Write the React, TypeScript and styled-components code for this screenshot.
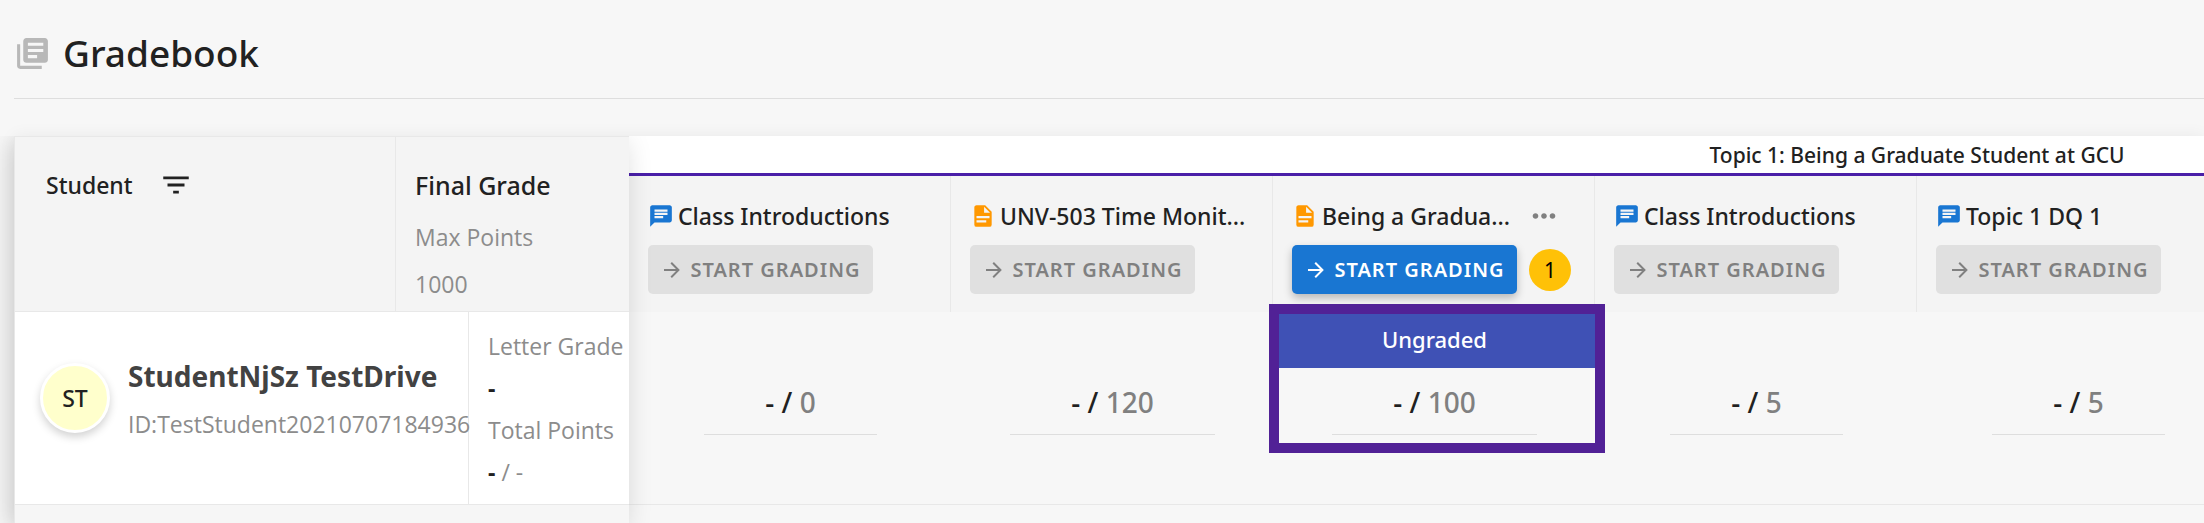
import React from "react";
import styled, { createGlobalStyle } from "styled-components";
import { MdChat, MdFilterList, MdLibraryBooks, MdMoreHoriz } from "react-icons/md";

const GlobalStyle = createGlobalStyle`
  * { box-sizing: border-box; }
  body {
    margin: 0;
    background: #f7f7f7;
    color: #212121;
    font-family: "Noto Sans", "Open Sans", sans-serif;
    font-size: 23px;
    font-weight: 500;
    line-height: 32px;
  }
`;

const Page = styled.div`
  display: flex;
  flex-direction: column;
  height: 100vh;
  min-height: 520px;
  padding-left: 14px;
  overflow: hidden;
`;

const PageHeader = styled.header`
  display: flex;
  align-items: center;
  gap: 12px;
  padding: 28px 0 20px;
  border-bottom: 1px solid #dedede;
  color: #b8b8b8;
`;

const PageTitle = styled.h1`
  margin: 0;
  color: #212121;
  font-size: 37px;
  font-weight: 500;
  line-height: 50px;
`;

const Gradebook = styled.main`
  display: flex;
  flex: 1;
  margin-top: 37px;
  box-shadow: 0 0 16px rgba(0, 0, 0, 0.06);
`;

const StudentPane = styled.section`
  flex: none;
  width: 615px;
  position: relative;
  z-index: 1;
  border-left: 1px solid #e8e8e8;
  background: #f6f6f6;
  box-shadow: -4px 6px 26px rgba(0, 0, 0, 0.16);
  clip-path: inset(0 -34px 0 -14px);
`;

const Table = styled.table`
  width: 100%;
  border-collapse: separate;
  border-spacing: 0;
  table-layout: fixed;
`;

const StudentHead = styled.th<{ $divided?: boolean }>`
  height: 176px;
  padding: ${(p) => (p.$divided ? "16px 18px 0 19px" : "16px 31px 0")};
  border-top: 1px solid #e8e8e8;
  border-bottom: 1px solid #e8e8e8;
  border-left: ${(p) => (p.$divided ? "1px solid #e8e8e8" : "0")};
  background: #f4f4f4;
  text-align: left;
  vertical-align: top;
  font-weight: 500;
`;

const HeadLine = styled.div`
  display: flex;
  align-items: center;
  gap: 26px;
  height: 64px;
`;

const IconButton = styled.button`
  display: flex;
  padding: 0;
  border: 0;
  background: none;
  color: inherit;
`;

const FinalTitle = styled.div`
  padding-top: 16px;
  font-size: 25px;
`;

const Muted = styled.div<{ $gap?: number }>`
  margin-top: ${(p) => p.$gap ?? 0}px;
  color: #8c8c8c;
  font-family: "Open Sans", "Noto Sans", sans-serif;
  font-weight: 400;
`;

const StudentCell = styled.td<{ $divided?: boolean }>`
  height: 193px;
  padding: ${(p) => (p.$divided ? "13px 0 0 19px" : "0 0 20px 25px")};
  border-bottom: 1px solid #e8e8e8;
  border-left: ${(p) => (p.$divided ? "1px solid #e8e8e8" : "0")};
  background: #fff;
  vertical-align: ${(p) => (p.$divided ? "top" : "middle")};
  white-space: nowrap;
`;

const Student = styled.div`
  display: flex;
  align-items: center;
  gap: 18px;
`;

const StudentText = styled.div`
  padding-top: 4px;
`;

const Avatar = styled.div`
  display: flex;
  flex: none;
  align-items: center;
  justify-content: center;
  width: 70px;
  height: 70px;
  border: 3px solid #fff;
  border-radius: 50%;
  background: #ffffcc;
  box-shadow: 0 4px 8px rgba(0, 0, 0, 0.18);
`;

const StudentName = styled.div`
  color: #424242;
  font-size: 28px;
  font-weight: 700;
`;

const Stat = styled.div<{ $strong?: boolean }>`
  height: 42px;
  line-height: 42px;
  color: ${(p) => (p.$strong ? "#212121" : "#8c8c8c")};
  font-family: "Open Sans", "Noto Sans", sans-serif;
  font-weight: ${(p) => (p.$strong ? 700 : 400)};
`;

const Light = styled.span`
  color: #8c8c8c;
  font-weight: 400;
`;

const AssignmentPane = styled.section`
  flex: 1;
  min-width: 0;
  overflow: hidden;
`;

const AssignmentTable = styled(Table)`
  width: 2576px;
`;

const TopicHead = styled.th`
  height: 40px;
  padding: 0;
  border-bottom: 3px solid #4a1fa8;
  background: #fff;
  font-size: 21px;
  font-weight: 500;
  line-height: 32px;
`;

const AssignmentHead = styled.th`
  height: 136px;
  padding: 23px 19px 0;
  border-right: 1px solid #e8e8e8;
  background: #f4f4f4;
  text-align: left;
  vertical-align: top;
  font-weight: 500;
`;

const AssignmentTitle = styled.div`
  display: flex;
  align-items: center;
  height: 34px;
`;

const TitleText = styled.span`
  flex: 1;
  min-width: 0;
  margin-left: 4px;
  white-space: nowrap;
`;

const MenuButton = styled(IconButton)`
  margin-right: 14px;
  color: #808080;
`;

const Actions = styled.div`
  display: flex;
  align-items: center;
  gap: 12px;
  margin-top: 12px;
`;

const StartButton = styled.button`
  display: flex;
  align-items: center;
  justify-content: center;
  gap: 6px;
  width: 225px;
  height: 49px;
  padding: 0;
  border: 0;
  border-radius: 5px;
  background: #1976d2;
  color: #fff;
  font: inherit;
  font-size: 20px;
  font-weight: 600;
  letter-spacing: 1px;
  white-space: nowrap;
  box-shadow: 0 4px 8px rgba(0, 0, 0, 0.25);

  &:disabled {
    background: #e0e0e0;
    color: #808080;
    box-shadow: none;
  }
`;

const CountBadge = styled.span`
  display: flex;
  align-items: center;
  justify-content: center;
  width: 42px;
  height: 42px;
  border-radius: 50%;
  background: #ffc107;
  color: #000;
  font-size: 21px;
  font-weight: 400;
`;

const ScoreCell = styled.td`
  position: relative;
  height: 193px;
  padding: 0 0 0 1px;
  border-bottom: 1px solid #e8e8e8;
  text-align: center;
  vertical-align: top;
`;

const StatusBand = styled.div<{ $filled: boolean }>`
  height: 56px;
  background: ${(p) => (p.$filled ? "#3f51b5" : "transparent")};
  color: #fff;
  font-size: 22px;
  line-height: 54px;
`;

const Score = styled.div`
  display: inline-block;
  height: 67px;
  padding: 0 61px;
  border-bottom: 1px solid #dedede;
  font-size: 28px;
  line-height: 68px;

  span { color: #808080; }
`;

const Highlight = styled.div`
  position: absolute;
  inset: -8px -10px 51px -4px;
  border: 10px solid #512196;
  z-index: 1;
`;

const FileIcon = () => (
  <svg width="26" height="26" viewBox="0 0 24 24" fill="#ff9800" aria-hidden="true">
    <path d="M13 9h5.500L13 3.500V9M6 2h8l6 6v12a2 2 0 0 1-2 2H6a2 2 0 0 1-2-2V4c0-1.110.890-2 2-2m9 16v-2H6v2h9m3-4v-2H6v2h12z" />
  </svg>
);

const ArrowIcon = () => (
  <svg width="24" height="24" viewBox="0 0 24 24" fill="currentColor" aria-hidden="true">
    <path d="M4 11v2h12l-5.500 5.500 1.420 1.420L19.840 12l-7.920-7.920L10.500 5.500 16 11H4z" />
  </svg>
);

type Assignment = {
  title: string;
  kind: "chat" | "file";
  points: number;
  pending?: number;
};

const assignments: Assignment[] = [
  { title: "Class Introductions", kind: "chat", points: 0 },
  { title: "UNV-503 Time Monit...", kind: "file", points: 120 },
  { title: "Being a Gradua...", kind: "file", points: 100, pending: 1 },
  { title: "Class Introductions", kind: "chat", points: 5 },
  { title: "Topic 1 DQ 1", kind: "chat", points: 5 },
];

const COLUMN_COUNT = 8;

export default function App() {
  return (
    <>
      <GlobalStyle />
      <Page>
        <PageHeader>
          <MdLibraryBooks size={37} />
          <PageTitle>Gradebook</PageTitle>
        </PageHeader>
        <Gradebook>
          <StudentPane>
            <Table>
              <colgroup>
                <col style={{ width: 380 }} />
                <col style={{ width: 73 }} />
                <col />
              </colgroup>
              <thead>
                <tr>
                  <StudentHead>
                    <HeadLine>
                      Student
                      <IconButton aria-label="Filter students">
                        <MdFilterList size={34} />
                      </IconButton>
                    </HeadLine>
                  </StudentHead>
                  <StudentHead $divided colSpan={2}>
                    <FinalTitle>Final Grade</FinalTitle>
                    <Muted $gap={20}>Max Points</Muted>
                    <Muted $gap={15}>1000</Muted>
                  </StudentHead>
                </tr>
              </thead>
              <tbody>
                <tr>
                  <StudentCell colSpan={2}>
                    <Student>
                      <Avatar>ST</Avatar>
                      <StudentText>
                        <StudentName>StudentNjSz TestDrive</StudentName>
                        <Muted $gap={16}>ID:TestStudent20210707184936</Muted>
                      </StudentText>
                    </Student>
                  </StudentCell>
                  <StudentCell $divided>
                    <Stat>Letter Grade</Stat>
                    <Stat $strong>-</Stat>
                    <Stat>Total Points</Stat>
                    <Stat $strong>
                      - <Light>/ -</Light>
                    </Stat>
                  </StudentCell>
                </tr>
              </tbody>
            </Table>
          </StudentPane>
          <AssignmentPane>
            <AssignmentTable>
              <thead>
                <tr>
                  <TopicHead colSpan={COLUMN_COUNT}>Topic 1: Being a Graduate Student at GCU</TopicHead>
                </tr>
                <tr>
                  {assignments.map((a, i) => (
                    <AssignmentHead key={i}>
                      <AssignmentTitle>
                        {a.kind === "chat" ? <MdChat size={26} color="#1976d2" /> : <FileIcon />}
                        <TitleText>{a.title}</TitleText>
                        {a.pending && (
                          <MenuButton aria-label="More options">
                            <MdMoreHoriz size={34} />
                          </MenuButton>
                        )}
                      </AssignmentTitle>
                      <Actions>
                        <StartButton disabled={!a.pending}>
                          <ArrowIcon />
                          START GRADING
                        </StartButton>
                        {a.pending && <CountBadge>{a.pending}</CountBadge>}
                      </Actions>
                    </AssignmentHead>
                  ))}
                  <AssignmentHead colSpan={COLUMN_COUNT - assignments.length} />
                </tr>
              </thead>
              <tbody>
                <tr>
                  {assignments.map((a, i) => (
                    <ScoreCell key={i}>
                      <StatusBand $filled={!!a.pending}>{a.pending ? "Ungraded" : null}</StatusBand>
                      <Score>
                        - / <span>{a.points}</span>
                      </Score>
                      {a.pending && <Highlight />}
                    </ScoreCell>
                  ))}
                  <ScoreCell colSpan={COLUMN_COUNT - assignments.length} />
                </tr>
              </tbody>
            </AssignmentTable>
          </AssignmentPane>
        </Gradebook>
      </Page>
    </>
  );
}
